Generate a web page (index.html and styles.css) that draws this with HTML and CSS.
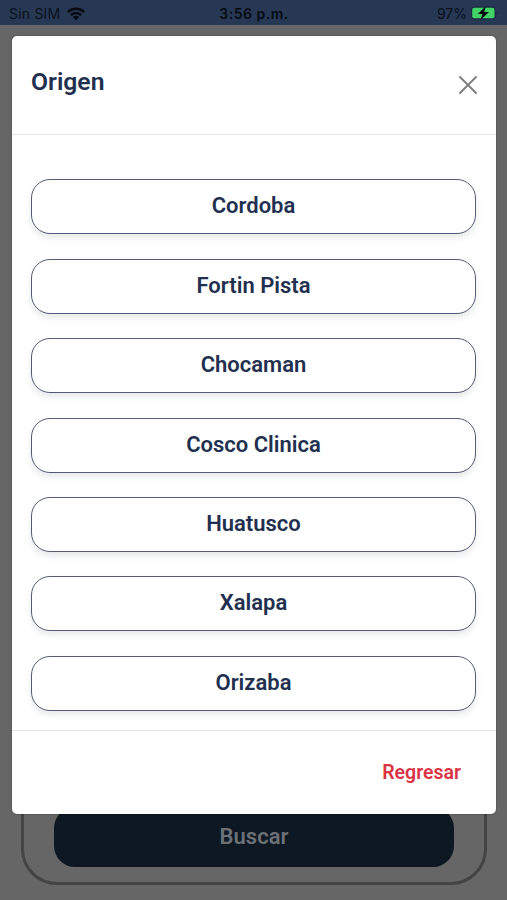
FILE: index.html
```html
<!DOCTYPE html>
<html lang="es">
<head>
    <meta charset="UTF-8">
    <meta name="viewport" content="width=device-width, initial-scale=1.0">
    <title>Origen</title>
    <link rel="stylesheet" href="styles.css">
</head>
<body>
    <div class="status-bar">
        <div class="carrier">
            <span>Sin SIM</span>
            <svg class="wifi" width="20" height="14" viewBox="0 0 20 14">
                <path d="M1.8 5.1a11.7 11.7 0 0 1 16.4 0M4.8 8.1a7.4 7.4 0 0 1 10.4 0" fill="none" stroke="#080b12" stroke-width="2.6"/>
                <path d="M10 13.3L6.8 10a4.6 4.6 0 0 1 6.4 0z" fill="#080b12"/>
            </svg>
        </div>
        <div class="clock">3:56 p.m.</div>
        <div class="battery">
            <span>97%</span>
            <svg width="28" height="14" viewBox="0 0 28 14">
                <rect x="0" y="0.5" width="25" height="13" rx="3.5" fill="#1c2b43"/>
                <rect x="1.2" y="1.7" width="22.3" height="10.6" rx="2" fill="#3fd465"/>
                <path d="M25.7 5v4.4a2.6 2.6 0 0 0 0-4.4z" fill="#1c2b43"/>
                <path d="M15 0L6.8 7.9h4.6L9.4 14l8.6-8.1h-4.9z" fill="#060a10"/>
            </svg>
        </div>
    </div>

    <main class="page">
        <div class="search-card">
            <button class="search-button">Buscar</button>
        </div>
    </main>

    <div class="modal">
        <div class="modal-header">
            <h1>Origen</h1>
            <button class="close-button" aria-label="Cerrar">
                <svg width="18" height="18" viewBox="0 0 18 18">
                    <path d="M1 1l16 16M17 1L1 17" stroke="#7c7c7c" stroke-width="1.8" stroke-linecap="round"/>
                </svg>
            </button>
        </div>
        <div class="modal-body">
            <button class="option">Cordoba</button>
            <button class="option">Fortin Pista</button>
            <button class="option">Chocaman</button>
            <button class="option">Cosco Clinica</button>
            <button class="option">Huatusco</button>
            <button class="option">Xalapa</button>
            <button class="option">Orizaba</button>
        </div>
        <div class="modal-footer">
            <button class="back-button">Regresar</button>
        </div>
    </div>
</body>
</html>
```

FILE: styles.css
```css
* {
    box-sizing: border-box;
}
body {
    margin: 0;
    height: 900px;
    display: flex;
    flex-direction: column;
    overflow: hidden;
    position: relative;
    background: #666;
    font-family: Roboto, sans-serif;
}
button {
    padding: 0;
    border: none;
    background: none;
    font-family: inherit;
    font-weight: 600;
}
.status-bar {
    display: grid;
    grid-template-columns: 1fr auto 1fr;
    align-items: center;
    height: 25px;
    padding: 2px 8px 0 9px;
    background: #263854;
    color: #0b111c;
    font-family: Inter, sans-serif;
    font-size: 14px;
}
.carrier {
    display: flex;
    align-items: center;
    gap: 6px;
}
.carrier span {
    letter-spacing: 0.2px;
}
.clock {
    color: #070b13;
    font-weight: 600;
    letter-spacing: 0.5px;
}
.battery {
    display: flex;
    align-items: center;
    justify-content: flex-end;
    gap: 4px;
}
.battery svg {
    margin-top: -1px;
}
.page {
    flex: 1;
    display: flex;
    padding: 40px 20px 15px 21px;
}
.search-card {
    flex: 1;
    display: flex;
    align-items: flex-end;
    padding: 0 30px 15px;
    border: 3px solid #444;
    border-radius: 36px;
}
.search-button {
    width: 100%;
    height: 60px;
    padding-bottom: 1px;
    border-radius: 21px;
    background: #0d1822;
    color: #6c7077;
    font-size: 22px;
}
.modal {
    position: absolute;
    top: 36px;
    left: 12px;
    width: 484px;
    height: 778px;
    display: flex;
    flex-direction: column;
    background: #fff;
    border-radius: 5px;
    box-shadow: 0 0 2px rgba(0, 0, 0, 0.35);
    color: #22304f;
}
.modal-header {
    display: flex;
    justify-content: space-between;
    height: 99px;
    padding: 31px 19px 0 19px;
    border-bottom: 1px solid #e2e4e6;
}
.modal-header h1 {
    margin: 0;
    font-size: 24.7px;
    font-weight: 600;
    line-height: 29px;
}
.close-button {
    height: 18px;
    margin-top: 9px;
    line-height: 0;
}
.modal-body {
    flex: 1;
    display: flex;
    flex-direction: column;
    gap: 24.4px;
    padding: 44.4px 20px 0 19px;
}
.option {
    height: 55px;
    flex-shrink: 0;
    padding-bottom: 2px;
    border: 1.5px solid #555b76;
    border-radius: 19px;
    background: #fff;
    box-shadow: 0 4px 6px rgba(60, 75, 85, 0.12);
    color: #22304f;
    font-size: 22px;
}
.modal-footer {
    display: flex;
    align-items: center;
    justify-content: flex-end;
    height: 84px;
    padding-right: 35px;
    border-top: 1px solid #e2e4e6;
}
.back-button {
    color: #d93445;
    font-size: 19.5px;
}
```
